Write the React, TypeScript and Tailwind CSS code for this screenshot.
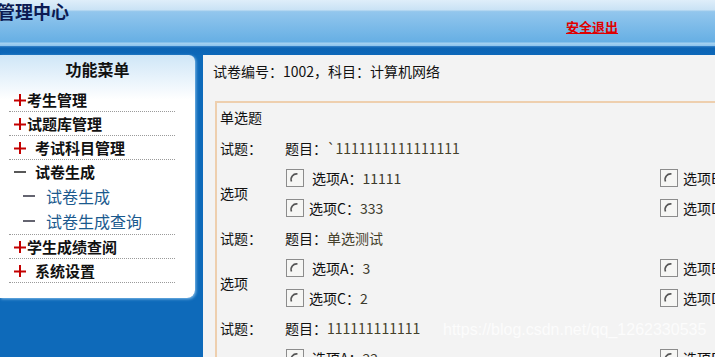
import type { ReactNode } from 'react'

const cjk = "font-['SimSun','Noto_Sans_CJK_SC',sans-serif]"

function Plus() {
  return (
    <svg width="12" height="12" viewBox="0 0 12 12" className="shrink-0">
      <path d="M0 6.5 H12 M6 0 V12" stroke="#c40000" strokeWidth="2" />
    </svg>
  )
}

function Dash({ color = '#111' }: { color?: string }) {
  return (
    <svg width="12" height="12" viewBox="0 0 12 12" className="shrink-0">
      <path d="M0 6 H12" stroke={color} strokeWidth="1.4" />
    </svg>
  )
}

function Radio() {
  return (
    <svg width="18" height="18" viewBox="0 0 18 18" className="shrink-0">
      <rect x="0.5" y="0.5" width="17" height="17" fill="#f6f6f4" stroke="#8c8c8c" />
      <path d="M5.5 12.5 A5.5 5.5 0 0 1 11.5 5" fill="none" stroke="#555" strokeWidth="1.6" />
    </svg>
  )
}

const menu = [
  { label: '考生管理', gap: 'ml-[1px]' },
  { label: '试题库管理', gap: 'ml-[1px]' },
  { label: '考试科目管理', gap: 'ml-[9px]' },
]

function MenuRow({ children, h = 'h-[24px]', border = true }: { children: ReactNode; h?: string; border?: boolean }) {
  return (
    <div className={`${h} flex items-center ${border ? 'border-b border-dotted border-[#9a9a9a]' : ''}`}>
      {children}
    </div>
  )
}

function Question({ title, a, b, c, d }: { title: string; a: string; b: string; c: string; d: string }) {
  return (
    <div>
      <div className="h-[30px] flex items-center">
        <span className="w-[65px]">试题：</span>
        <span>
          题目：<span className="text-[#44402a]">{title}</span>
        </span>
      </div>
      <div className="flex">
        <div className="w-[65px] flex items-center">选项</div>
        <div className="flex flex-col">
          {[
            [a, b, 'A', 'B'],
            [c, d, 'C', 'D'],
          ].map(([v1, v2, k1, k2]) => (
            <div key={k1} className="h-[30px] flex items-center">
              <div className="w-[375px] flex items-center pl-[1px]">
                <Radio />
                <span className={k1 === 'A' ? 'ml-[8px]' : 'ml-[5px]'}>
                  选项{k1}：<span className="text-[#3c3a2c]">{v1}</span>
                </span>
              </div>
              <div className="flex items-center whitespace-nowrap">
                <Radio />
                <span className="ml-[5px]">
                  选项{k2}：{v2}
                </span>
              </div>
            </div>
          ))}
        </div>
      </div>
    </div>
  )
}

export default function App() {
  return (
    <div className={`relative w-[715px] h-[357px] overflow-hidden bg-[#f3f3f3] ${cjk}`}>
      {/* header */}
      <div className="h-[46px] flex items-start bg-[linear-gradient(to_bottom,#dfeefa_0px,#c9e2f5_10px,#9ccaec_11px,#92c6ed_12px,#66afe4_42px,#a6d2f1_43px,#8cc3ec_46px)]">
        <div className="-ml-[3px] mt-[0px] text-[18px] leading-[22px] font-bold text-[#0c1a52]">管理中心</div>
        <a className="ml-auto mr-[97px] mt-[17px] text-[13px] leading-[20px] font-bold text-[#e00000] underline">
          安全退出
        </a>
      </div>
      <div className="h-[9px] bg-[linear-gradient(to_bottom,#3a86cc_0px,#0c64b4_2px,#0d68b9_9px)]" />

      {/* body */}
      <div className="flex h-[302px]">
        <div className="w-[203px] shrink-0 bg-[#0e6aba] flex flex-col">
          <div className="w-[195px] h-[243px] rounded-tr-[6px] rounded-br-[8px] bg-[linear-gradient(to_bottom,#cfe6f7_0px,#ffffff_45px)] shadow-[1px_1px_3px_#7fbbe8]">
            <div className="h-[33px] pb-[5px] flex items-center justify-center text-[16px] font-bold text-[#111]">功能菜单</div>
            <div className="ml-[9px] w-[166px] text-[15px] leading-none text-[#111]">
              {menu.map((m) => (
                <MenuRow key={m.label}>
                  <span className="ml-[5px]"><Plus /></span>
                  <span className={`${m.gap} font-bold`}>{m.label}</span>
                </MenuRow>
              ))}
              <div className="border-b border-dotted border-[#9a9a9a]">
                <MenuRow h="h-[23px]" border={false}>
                  <span className="ml-[5px]"><Dash /></span>
                  <span className="ml-[9px] font-bold">试卷生成</span>
                </MenuRow>
                <MenuRow h="h-[25px]" border={false}>
                  <span className="ml-[14px]"><Dash color="#223" /></span>
                  <span className="ml-[11px] text-[16px] text-[#1b5a8e]">试卷生成</span>
                </MenuRow>
                <MenuRow h="h-[26px]" border={false}>
                  <span className="ml-[14px]"><Dash color="#223" /></span>
                  <span className="ml-[11px] text-[16px] text-[#1b5a8e]">试卷生成查询</span>
                </MenuRow>
              </div>
              <MenuRow>
                <span className="ml-[5px]"><Plus /></span>
                <span className="ml-[1px] font-bold">学生成绩查阅</span>
              </MenuRow>
              <MenuRow>
                <span className="ml-[5px]"><Plus /></span>
                <span className="ml-[9px] font-bold">系统设置</span>
              </MenuRow>
            </div>
          </div>
        </div>

        <div className="flex-1 min-w-0 pl-[10px] pt-[6px] text-[14px] leading-[20px] text-[#111]">
          <div>试卷编号：1002，科目：计算机网络</div>
          <div className="ml-[2px] mt-[20px] w-[700px] border-l-2 border-t-2 border-[#eecfae] pl-[3px] pt-[4px]">
            <div>单选题</div>
            <div className="mt-[6px]">
              <Question title="`1111111111111111" a="11111" b="22222" c="333" d="444" />
              <Question title="单选测试" a="3" b="1" c="2" d="4" />
              <Question title="111111111111" a="22" b="33" c="44" d="55" />
            </div>
          </div>
        </div>
      </div>

      <div className="absolute left-[443px] top-[320px] text-[16px] leading-[20px] text-white/75 font-['Liberation_Sans',sans-serif]">
        https://blog.csdn.net/qq_1262330535
      </div>
    </div>
  )
}
